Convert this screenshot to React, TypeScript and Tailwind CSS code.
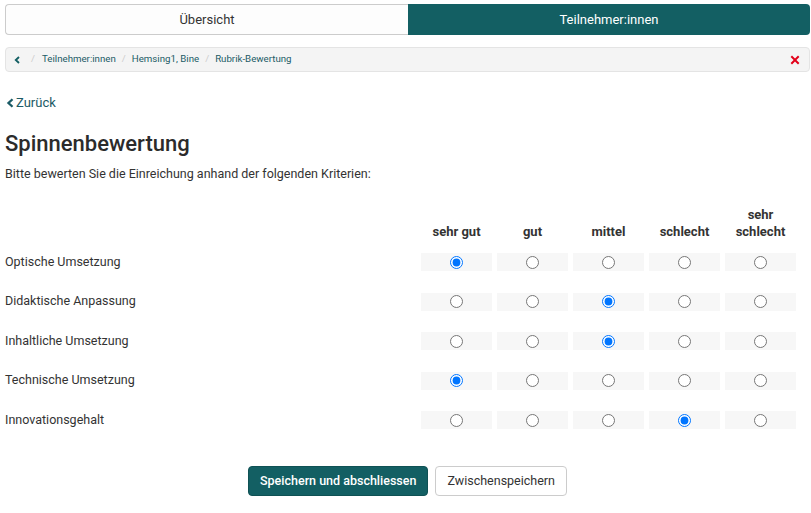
import React from "react";

const columns = ["sehr gut", "gut", "mittel", "schlecht", "sehr schlecht"];

const criteria = [
  { label: "Optische Umsetzung", value: 0 },
  { label: "Didaktische Anpassung", value: 2 },
  { label: "Inhaltliche Umsetzung", value: 2 },
  { label: "Technische Umsetzung", value: 0 },
  { label: "Innovationsgehalt", value: 3 },
];

// font-awesome style chevron
const Chevron = ({ className }: { className?: string }) => (
  <svg viewBox="0 0 10 12" className={className} fill="none" stroke="currentColor" strokeWidth={2.8}>
    <polyline points="8,1.5 3.2,6 8,10.5" />
  </svg>
);

const App: React.FC = () => {
  return (
    <div className="w-[811px] h-[513px] bg-white pl-[5px] pr-[1px] pt-[4px] text-[#333] font-['Roboto',sans-serif] overflow-hidden">
      {/* Tabs */}
      <div className="flex h-[31px] text-[13px]">
        <div className="flex-1 flex items-center justify-center border border-[#cccccc] border-r-0 rounded-l-[4px] bg-[#fdfdfd] text-[#333]">
          Übersicht
        </div>
        <div className="flex-1 flex items-center justify-center rounded-r-[4px] bg-[#135f63] text-white">
          Teilnehmer:innen
        </div>
      </div>

      {/* Breadcrumb */}
      <div className="mt-[12px] h-[25px] flex items-center bg-[#f4f4f4] border border-[#e4e4e4] rounded-[4px] pl-[7px] pr-[9px] text-[9.7px]">
        <Chevron className="w-[8px] h-[8px] text-[#135f63]" />
        <span className="ml-[10px] mr-[7px] text-[#cccccc]">/</span>
        <span className="text-[#1b5b66]">Teilnehmer:innen</span>
        <span className="mx-[6px] text-[#cccccc]">/</span>
        <span className="text-[#1b5b66]">Hemsing1, Bine</span>
        <span className="mx-[6px] text-[#cccccc]">/</span>
        <span className="text-[#1b5b66]">Rubrik-Bewertung</span>
        <svg viewBox="0 0 10 10" className="ml-auto w-[10px] h-[10px] text-[#e2001a]" fill="currentColor">
          <path d="M2 0.6 L5 3.6 L8 0.6 L9.4 2 L6.4 5 L9.4 8 L8 9.4 L5 6.4 L2 9.4 L0.6 8 L3.6 5 L0.6 2 Z" />
        </svg>
      </div>

      {/* Back */}
      <div className="mt-[22px] flex items-center gap-[1px] text-[13px] text-[#1b5b66] h-[17px]">
        <Chevron className="w-[10px] h-[10px]" />
        <span>Zurück</span>
      </div>

      <h2 className="mt-[20px] text-[22px] font-medium leading-[26px] text-[#2b2b2b]">Spinnenbewertung</h2>
      <p className="mt-[9px] text-[12.5px] leading-[16px]">
        Bitte bewerten Sie die Einreichung anhand der folgenden Kriterien:
      </p>

      {/* Rubric */}
      <div className="mt-[22px] grid grid-cols-[411px_repeat(5,71px)] gap-x-[5px]">
        <div />
        {columns.map((c) => (
          <div
            key={c}
            className="flex items-end justify-center text-center font-bold text-[13px] leading-[17px] h-[37px] pb-[1px] px-[8px]"
          >
            {c}
          </div>
        ))}
        {criteria.map((row, ri) => (
          <React.Fragment key={row.label}>
            <div className={`flex items-center text-[12.5px] h-[18px] ${ri === 0 ? "mt-[12px]" : "mt-[21.5px]"}`}>
              {row.label}
            </div>
            {columns.map((c, ci) => (
              <div
                key={c}
                className={`flex items-center justify-center bg-[#f7f7f7] h-[18px] ${ri === 0 ? "mt-[12px]" : "mt-[21.5px]"}`}
              >
                <input
                  type="radio"
                  readOnly
                  checked={row.value === ci}
                  name={row.label}
                  className="m-0 w-[13px] h-[13px]"
                />
              </div>
            ))}
          </React.Fragment>
        ))}
      </div>

      {/* Buttons */}
      <div className="mt-[37px] flex justify-center gap-[7px] text-[12.5px]">
        <button className="h-[30px] px-[11px] rounded-[4px] bg-[#135f63] border border-[#0f5154] text-white font-medium">
          Speichern und abschliessen
        </button>
        <button className="h-[30px] px-[11px] rounded-[4px] bg-white border border-[#cccccc] text-[#333]">
          Zwischenspeichern
        </button>
      </div>
    </div>
  );
};

export default App;
